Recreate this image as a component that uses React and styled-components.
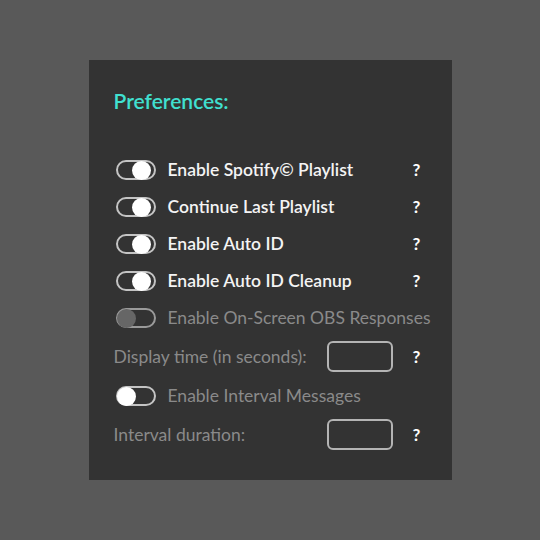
import styled, { createGlobalStyle } from 'styled-components';

const GlobalStyle = createGlobalStyle`
  html, body {
    margin: 0;
    padding: 0;
    background-color: #595959;
  }
`;

const Page = styled.div`
  width: 540px;
  height: 540px;
  display: flex;
  align-items: center;
  justify-content: center;
  font-family: 'Lato', 'Noto Sans', sans-serif;
`;

const Panel = styled.div`
  width: 363px;
  height: 420px;
  box-sizing: border-box;
  background-color: #333333;
  padding: 29px 31px 0 25px;
`;

const Heading = styled.h2`
  margin: 0 0 38px;
  color: #40e0d0;
  font-size: 21px;
  font-weight: 600;
  line-height: 24px;
`;

const Row = styled.div`
  display: flex;
  align-items: center;
  height: ${({ $tall }) => ($tall ? '41px' : '37px')};
`;

const Main = styled.div`
  flex: 1;
  display: flex;
  align-items: center;
`;

const Track = styled.span`
  position: relative;
  display: inline-block;
  box-sizing: border-box;
  width: 40px;
  height: 20px;
  margin: 0 12px 0 2px;
  border: 2px solid ${({ $disabled }) => ($disabled ? '#9a9a9a' : '#c4c4c4')};
  border-radius: 10px;
`;

const Knob = styled.span`
  position: absolute;
  top: -1px;
  left: ${({ $on }) => ($on ? '14px' : '-1px')};
  width: 19px;
  height: 19px;
  border-radius: 50%;
  background-color: ${({ $disabled }) => ($disabled ? '#666666' : '#ffffff')};
`;

const Label = styled.span`
  color: ${({ $dim }) => ($dim ? '#8a8a8a' : '#f4f4f4')};
  font-size: 17.5px;
  font-weight: ${({ $dim }) => ($dim ? 400 : 600)};
  white-space: nowrap;
  width: ${({ $width }) => $width || 'auto'};
`;

const NumberBox = styled.input`
  box-sizing: border-box;
  width: 66px;
  height: 31px;
  background: transparent;
  border: 2px solid #b4b4b4;
  border-radius: 6px;
  color: #f4f4f4;
  font: inherit;
  outline: none;
`;

const Help = styled.span`
  width: 8px;
  color: #ffffff;
  font-size: 17px;
  font-weight: 700;
  text-align: center;
`;

const Toggle = ({ on, disabled }) => (
  <Track $disabled={disabled}>
    <Knob $on={on} $disabled={disabled} />
  </Track>
);

const ToggleRow = ({ label, on, disabled, dim, help }) => (
  <Row>
    <Main>
      <Toggle on={on} disabled={disabled} />
      <Label $dim={dim || disabled}>{label}</Label>
    </Main>
    {help && <Help>?</Help>}
  </Row>
);

const InputRow = ({ label }) => (
  <Row $tall>
    <Main>
      <Label $dim $width='213px'>{label}</Label>
      <NumberBox type='text' />
    </Main>
    <Help>?</Help>
  </Row>
);

const App = () => (
  <Page>
    <GlobalStyle />
    <Panel>
      <Heading>Preferences:</Heading>
      <ToggleRow label='Enable Spotify© Playlist' on help />
      <ToggleRow label='Continue Last Playlist' on help />
      <ToggleRow label='Enable Auto ID' on help />
      <ToggleRow label='Enable Auto ID Cleanup' on help />
      <ToggleRow label='Enable On-Screen OBS Responses' disabled />
      <InputRow label='Display time (in seconds):' />
      <ToggleRow label='Enable Interval Messages' dim />
      <InputRow label='Interval duration:' />
    </Panel>
  </Page>
);

export default App;
